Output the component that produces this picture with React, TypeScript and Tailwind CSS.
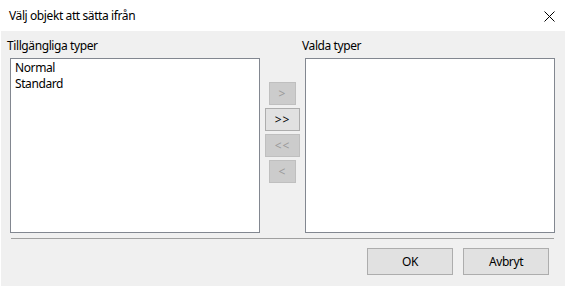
import React from "react";

function DisabledBtn({ label, w }: { label: string; w: string }) {
  return (
    <div
      className={`${w} h-[23px] border border-[#bfbfbf] bg-[#cccccc] text-[#9a9a9a] flex items-center justify-center leading-[16px] tracking-[1px]`}
    >
      {label}
    </div>
  );
}

export default function App() {
  return (
    <div className="w-[565px] h-[287px] bg-white flex flex-col text-[12px] tracking-[-0.4px] text-black font-['Segoe_UI','Noto_Sans',sans-serif]">
      <div className="h-[31px] flex justify-between pl-[9px] pr-[10px] shrink-0">
        <div className="leading-[16px] pt-[8px]">Välj objekt att sätta ifrån</div>
        <svg width="11" height="11" viewBox="0 0 11 11" className="mt-[11px]">
          <path d="M0.5 0.5 L10.5 10.5 M10.5 0.5 L0.5 10.5" stroke="#000" strokeWidth="1" />
        </svg>
      </div>
      <div className="flex-1 ml-[1px] mb-[1px] bg-[#f0f0f0] flex flex-col">
        <div className="flex pt-[7px] pl-[6px] h-[27px] leading-[16px]">
          <div className="w-[295px]">Tillgängliga typer</div>
          <div>Valda typer</div>
        </div>
        <div className="flex pl-[9px]">
          <div className="w-[250px] h-[175px] border border-[#828790] bg-white pl-[4px] pt-[1px] leading-[16px]">
            <div>Normal</div>
            <div>Standard</div>
          </div>
          <div className="w-[45px] px-[5px] pt-[24px] flex flex-col items-center gap-[3px]">
            <DisabledBtn label="&gt;" w="w-[27px]" />
            <div className="w-[35px] h-[23px] border border-[#adadad] bg-[#e1e1e1] flex items-center justify-center leading-[16px] tracking-[1px]">
              &gt;&gt;
            </div>
            <DisabledBtn label="<<" w="w-[35px]" />
            <DisabledBtn label="<" w="w-[27px]" />
          </div>
          <div className="w-[250px] h-[175px] border border-[#828790] bg-white" />
        </div>
        <div className="mt-[5px] ml-[10px] w-[543px] h-px bg-[#a0a0a0]" />
        <div className="mt-[9px] flex justify-end gap-[10px] pr-[16px]">
          <div className="w-[86px] h-[27px] border border-[#adadad] bg-[#e1e1e1] flex items-center justify-center leading-[16px]">
            OK
          </div>
          <div className="w-[86px] h-[27px] border border-[#adadad] bg-[#e1e1e1] flex items-center justify-center leading-[16px]">
            Avbryt
          </div>
        </div>
      </div>
    </div>
  );
}
